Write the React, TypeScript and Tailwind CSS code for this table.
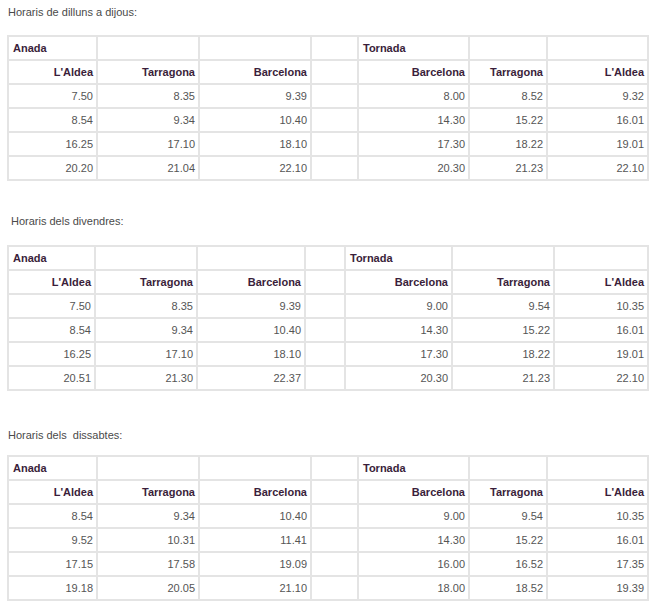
type Schedule = {
  title: string;
  titleClass: string;
  tableClass: string;
  cols: number[];
  rows: string[][];
};

const schedules: Schedule[] = [
  {
    title: "Horaris de dilluns a dijous:",
    titleClass: "pt-[4px] pl-[8px]",
    tableClass: "mt-[15px]",
    cols: [89, 102, 112, 47, 111, 78, 101],
    rows: [
      ["7.50", "8.35", "9.39", "8.00", "8.52", "9.32"],
      ["8.54", "9.34", "10.40", "14.30", "15.22", "16.01"],
      ["16.25", "17.10", "18.10", "17.30", "18.22", "19.01"],
      ["20.20", "21.04", "22.10", "20.30", "21.23", "22.10"],
    ],
  },
  {
    title: "Horaris dels divendres:",
    titleClass: "mt-[32px] pl-[11px]",
    tableClass: "mt-[16px]",
    cols: [87, 102, 108, 40, 107, 102, 94],
    rows: [
      ["7.50", "8.35", "9.39", "9.00", "9.54", "10.35"],
      ["8.54", "9.34", "10.40", "14.30", "15.22", "16.01"],
      ["16.25", "17.10", "18.10", "17.30", "18.22", "19.01"],
      ["20.51", "21.30", "22.37", "20.30", "21.23", "22.10"],
    ],
  },
  {
    title: "Horaris dels \u00a0dissabtes:",
    titleClass: "mt-[36px] pl-[8px]",
    tableClass: "mt-[12px]",
    cols: [89, 102, 112, 47, 111, 78, 101],
    rows: [
      ["8.54", "9.34", "10.40", "9.00", "9.54", "10.35"],
      ["9.52", "10.31", "11.41", "14.30", "15.22", "16.01"],
      ["17.15", "17.58", "19.09", "16.00", "16.52", "17.35"],
      ["19.18", "20.05", "21.10", "18.00", "18.52", "19.39"],
    ],
  },
];

const cell = "border-2 border-[#e4e4e4] h-[24px] p-0 pl-[4px] pr-[3px] align-middle";

function Timetable({ s }: { s: Schedule }) {
  const head = "text-[#3a1e3a] font-bold";
  return (
    <table
      className={`${s.tableClass} ml-[7px] w-[642px] table-fixed border-collapse text-[11px] leading-[13px]`}
    >
      <colgroup>
        {s.cols.map((w, i) => (
          <col key={i} style={{ width: w }} />
        ))}
      </colgroup>
      <tbody>
        <tr>
          <td className={`${cell} ${head} text-left`}>Anada</td>
          <td className={cell} />
          <td className={cell} />
          <td className={cell} />
          <td className={`${cell} ${head} text-left`}>Tornada</td>
          <td className={cell} />
          <td className={cell} />
        </tr>
        <tr>
          <td className={`${cell} ${head} text-right`}>L'Aldea</td>
          <td className={`${cell} ${head} text-right`}>Tarragona</td>
          <td className={`${cell} ${head} text-right`}>Barcelona</td>
          <td className={cell} />
          <td className={`${cell} ${head} text-right`}>Barcelona</td>
          <td className={`${cell} ${head} text-right`}>Tarragona</td>
          <td className={`${cell} ${head} text-right`}>L'Aldea</td>
        </tr>
        {s.rows.map((r, i) => (
          <tr key={i}>
            <td className={`${cell} text-right`}>{r[0]}</td>
            <td className={`${cell} text-right`}>{r[1]}</td>
            <td className={`${cell} text-right`}>{r[2]}</td>
            <td className={cell} />
            <td className={`${cell} text-right`}>{r[3]}</td>
            <td className={`${cell} text-right`}>{r[4]}</td>
            <td className={`${cell} text-right`}>{r[5]}</td>
          </tr>
        ))}
      </tbody>
    </table>
  );
}

export default function App() {
  return (
    <div className="w-[656px] h-[605px] overflow-hidden bg-white text-[#555555] font-['Liberation_Sans',Arial,sans-serif]">
      {schedules.map((s) => (
        <div key={s.title}>
          <p className={`${s.titleClass} text-[11px] leading-[16px] text-[#4a4a4a]`}>{s.title}</p>
          <Timetable s={s} />
        </div>
      ))}
    </div>
  );
}
